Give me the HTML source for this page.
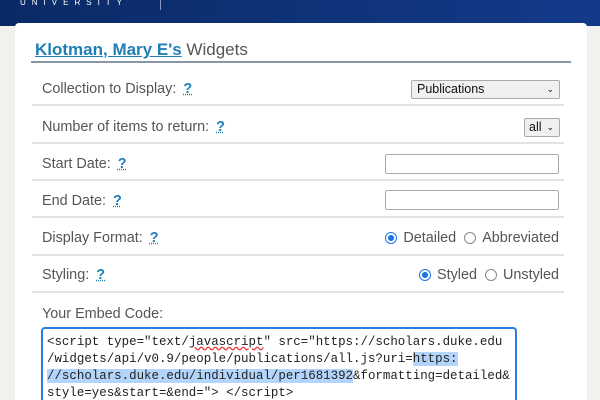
<!DOCTYPE html>
<html><head><style>
html{overflow:hidden;height:400px}
body{margin:0;width:600px;height:400px;overflow:hidden;background:#f1f1ee;font-family:"Liberation Sans",sans-serif;position:relative}
.hdr{position:absolute;left:0;top:0;width:600px;height:26px;background:linear-gradient(90deg,#0a2a66,#133a8a)}
.panel{position:absolute;left:15px;top:23px;width:572px;height:377px;background:#fff;border-radius:4px 4px 0 0}
.a{position:absolute}
.lbl{position:absolute;left:42px;font-size:14.4px;color:#555}
.q{color:#1f7fb5;font-weight:bold;text-decoration:underline dotted;margin-left:7px}
.sep{position:absolute;left:32px;width:532px;height:2px;background:#e2e2e2}
.box{position:absolute;border:1px solid #aaa;border-radius:2px;background:#fff}
.rad{display:inline-block;width:12px;height:12px;border:1px solid #888;border-radius:50%;vertical-align:-2px;margin-right:6px;box-sizing:border-box}
.on{border:1.5px solid #1a73e8;background:radial-gradient(#1a73e8 0 2.8px,#fff 3.2px)}
.r{position:absolute;font-size:14.4px;color:#555;right:41px}
pre{margin:0;font-family:"Liberation Mono",monospace;font-size:12.45px;line-height:17px;color:#222}
.hl{background:#b4d5fb}
</style></head><body>
<div class="hdr"><div class="a" style="left:20px;top:0;color:#fff;font-size:8px;letter-spacing:6px;line-height:5px">UNIVERSITY</div><div class="a" style="left:160px;top:0;width:1px;height:10px;background:#8899bb"></div></div>
<div class="panel"></div>
<div class="a" style="left:35px;top:40px;font-size:17px;color:#555"><span style="color:#1f7fb5;font-weight:bold;text-decoration:underline">Klotman, Mary E's</span> Widgets</div>
<div class="a" style="left:31px;top:61px;width:540px;height:2px;background:#8a96a3"></div>
<div class="lbl" style="top:81px">Collection to Display:<span class="q">?</span></div>
<div class="box" style="left:411px;top:80px;width:147px;height:17px;background:#f0f0f0;font-size:12.5px;line-height:17px;text-indent:5px;color:#111">Publications<span style="position:absolute;right:5px;font-size:9px">⌄</span></div>
<div class="sep" style="top:104px"></div>
<div class="lbl" style="top:119px">Number of items to return:<span class="q">?</span></div>
<div class="box" style="left:524px;top:118px;width:34px;height:17px;background:#f0f0f0;font-size:12.5px;line-height:17px;text-indent:4px;color:#111">all<span style="position:absolute;right:5px;font-size:9px">⌄</span></div>
<div class="sep" style="top:142px"></div>
<div class="lbl" style="top:156px">Start Date:<span class="q">?</span></div>
<div class="box" style="left:385px;top:154px;width:172px;height:18px"></div>
<div class="sep" style="top:179px"></div>
<div class="lbl" style="top:193px">End Date:<span class="q">?</span></div>
<div class="box" style="left:385px;top:190px;width:172px;height:18px"></div>
<div class="sep" style="top:216px"></div>
<div class="lbl" style="top:230px">Display Format:<span class="q">?</span></div>
<div class="r" style="top:230px"><span class="rad on"></span>Detailed &nbsp;<span class="rad"></span>Abbreviated</div>
<div class="sep" style="top:254px"></div>
<div class="lbl" style="top:267px">Styling:<span class="q">?</span></div>
<div class="r" style="top:267px"><span class="rad on"></span>Styled &nbsp;<span class="rad"></span>Unstyled</div>
<div class="sep" style="top:291px"></div>
<div class="lbl" style="top:306px">Your Embed Code:</div>
<div class="a" style="left:41px;top:327px;width:468px;height:64px;border:2px solid #2a7de1;border-bottom:none;border-radius:4px 4px 0 0;background:#fff;padding:5px 0 2px 4px;overflow:hidden">
<pre>&lt;script type="text/<span style="text-decoration:underline wavy #e33">javascript</span>" src="https://scholars.duke.edu
/widgets/api/v0.9/people/publications/all.js?uri=<span class="hl">https:</span>
<span class="hl">//scholars.duke.edu/individual/per1681392</span>&amp;formatting=detailed&amp;
style=yes&amp;start=&amp;end="&gt; &lt;/script&gt;</pre></div>
</body></html>
